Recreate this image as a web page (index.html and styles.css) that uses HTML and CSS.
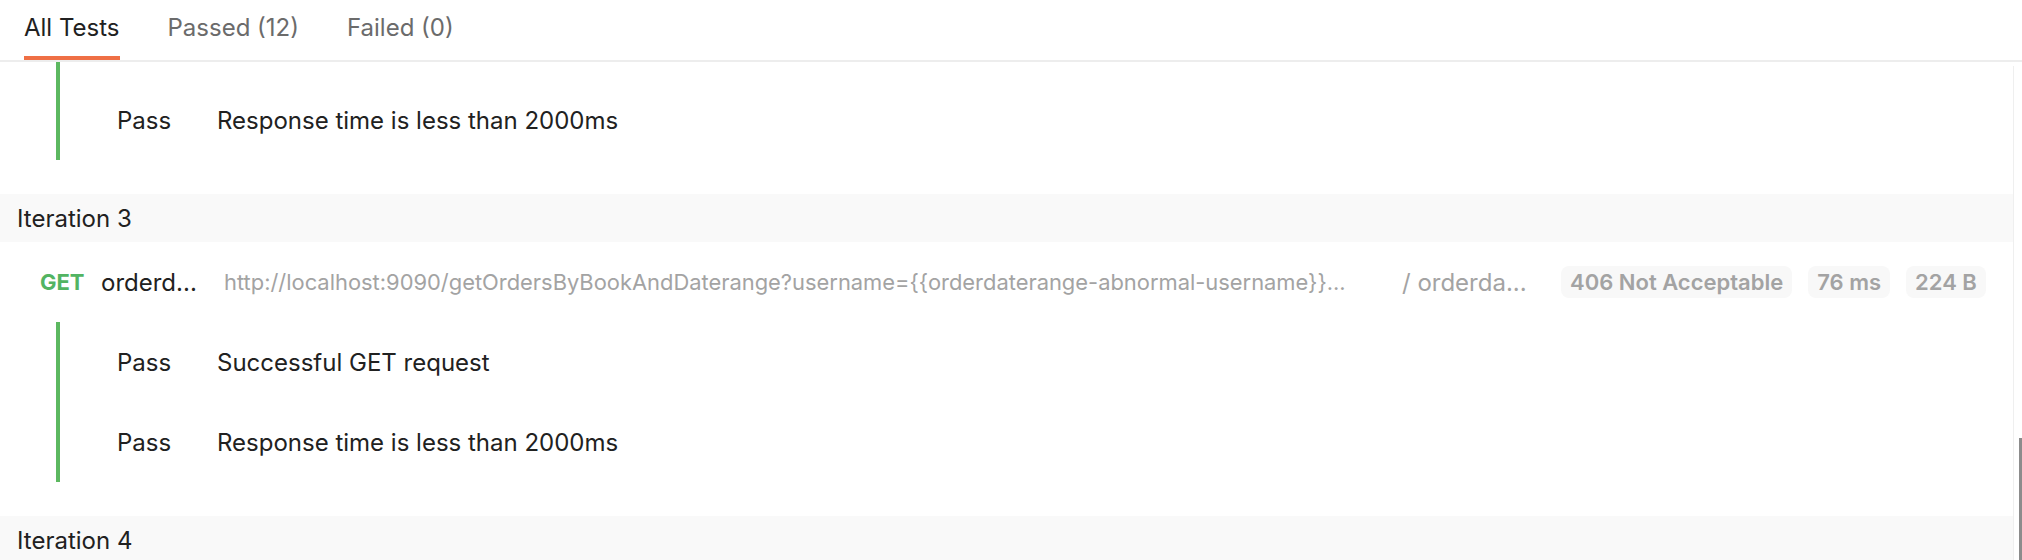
FILE: index.html
```html
<!DOCTYPE html>
<html lang="en">
<head>
<meta charset="utf-8">
<title>Test Results</title>
<link rel="stylesheet" href="styles.css">
</head>
<body>
<div class="app">
  <nav class="tabs">
    <div class="tab active">All Tests</div>
    <div class="tab">Passed (12)</div>
    <div class="tab">Failed (0)</div>
  </nav>
  <div class="pane">
    <div class="results">
      <div class="assertions first">
        <div class="assertion"><span class="status">Pass</span><span class="test-name">Response time is less than 2000ms</span></div>
      </div>
      <div class="iteration">Iteration 3</div>
      <div class="request">
        <span class="method">GET</span>
        <span class="req-name">orderd...</span>
        <span class="url">http://localhost:9090/getOrdersByBookAndDaterange?username={{orderdaterange-abnormal-username}}...</span>
        <span class="folder">/ orderda...</span>
        <div class="badges">
          <span class="badge">406 Not Acceptable</span>
          <span class="badge">76 ms</span>
          <span class="badge">224 B</span>
        </div>
      </div>
      <div class="assertions">
        <div class="assertion"><span class="status">Pass</span><span class="test-name">Successful GET request</span></div>
        <div class="assertion"><span class="status">Pass</span><span class="test-name">Response time is less than 2000ms</span></div>
      </div>
      <div class="iteration">Iteration 4</div>
    </div>
    <div class="scrollbar"><div class="thumb"></div></div>
  </div>
</div>
</body>
</html>
```

FILE: styles.css
```css
html, body {
  margin: 0;
  padding: 0;
  background: #ffffff;
}

body {
  font-family: Inter, "Noto Sans", sans-serif;
  font-size: 24px;
  color: #212121;
}

.app {
  height: 560px;
  display: flex;
  flex-direction: column;
  overflow: hidden;
}

.tabs {
  height: 60px;
  flex: none;
  display: flex;
  gap: 48px;
  padding-left: 24px;
  border-bottom: 2px solid #ededed;
}

.tab {
  display: flex;
  align-items: center;
  padding-bottom: 6px;
  box-sizing: border-box;
  height: 60px;
  color: #6b6b6b;
}

.tab.active {
  color: #212121;
  box-shadow: inset 0 -4px 0 #ef6f45;
}

.pane {
  flex: 1;
  min-height: 0;
  display: flex;
}

.results {
  flex: 1;
  min-width: 0;
  overflow: hidden;
}

.assertions {
  margin-left: 56px;
  margin-bottom: 34px;
  border-left: 4px solid #5cb860;
  padding-left: 57px;
}

.assertions.first {
  padding-top: 18px;
}

.assertion {
  height: 80px;
  display: flex;
  align-items: center;
}

.status {
  width: 100px;
  flex: none;
}

.iteration {
  height: 48px;
  background: #f9f9f9;
  padding-left: 17px;
  display: flex;
  align-items: center;
}

.request {
  height: 80px;
  display: flex;
  align-items: center;
  padding-left: 40px;
  white-space: nowrap;
}

.method {
  width: 61px;
  flex: none;
  color: #52b462;
  font-weight: 700;
  font-size: 22px;
}

.req-name {
  width: 123px;
  flex: none;
}

.url {
  width: 1178px;
  flex: none;
  color: #a3a3a3;
  font-size: 21.9px;
}

.folder {
  width: 159px;
  flex: none;
  color: #a3a3a3;
}

.badges {
  display: flex;
  gap: 16px;
}

.badge {
  height: 32px;
  padding: 0 9px;
  border-radius: 8px;
  background: #f8f8f8;
  color: #a3a3a3;
  font-weight: 600;
  font-size: 22px;
  display: flex;
  align-items: center;
}

.scrollbar {
  width: 9px;
  flex: none;
  display: flex;
  flex-direction: column;
  justify-content: flex-end;
  border-left: 1px solid #efefef;
  box-sizing: border-box;
  margin-top: 4px;
}

.thumb {
  height: 122px;
  width: 3px;
  margin-left: auto;
  background: #8c8c8c;
}
```
